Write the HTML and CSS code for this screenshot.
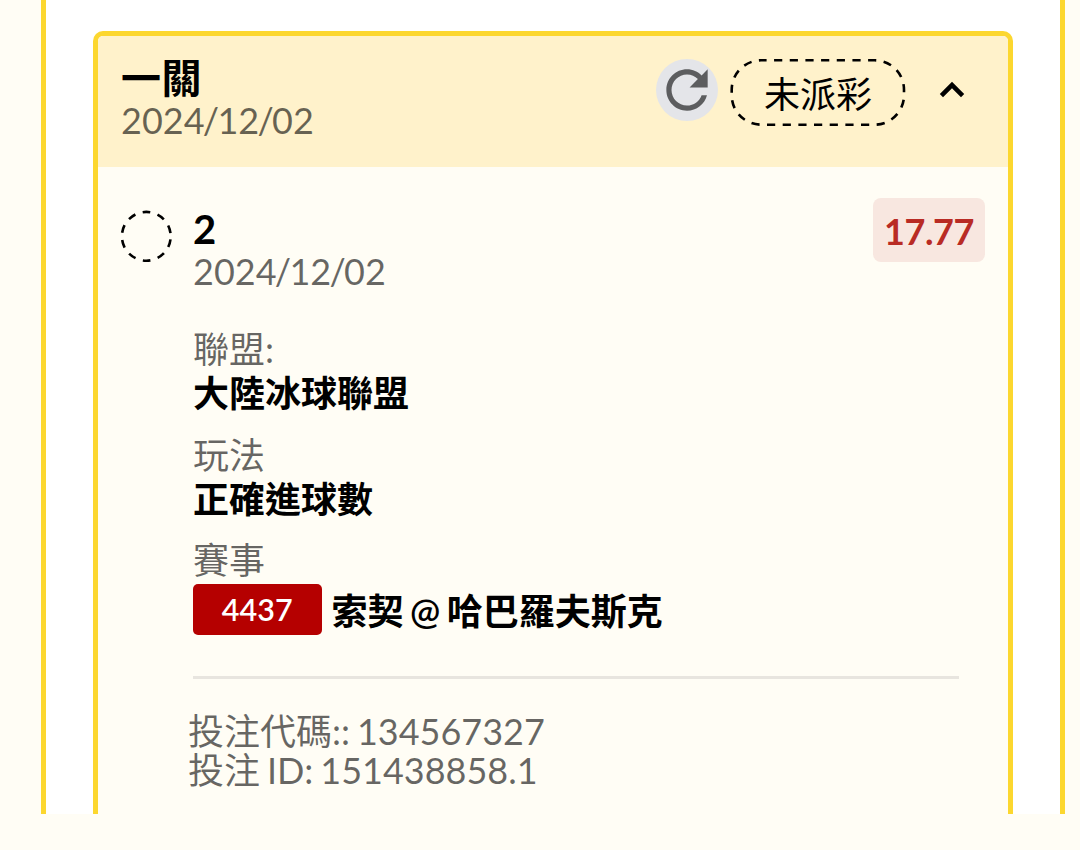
FILE: index.html
```html
<!DOCTYPE html>
<html lang="zh-Hant">
<head>
    <meta charset="UTF-8">
    <meta name="viewport" content="width=device-width, initial-scale=1.0">
    <title>投注記錄</title>
    <link rel="stylesheet" href="styles.css">
</head>
<body>
    <main class="panel">
        <section class="bet-card">
            <header class="card-header">
                <div class="heading">
                    <h1>一關</h1>
                    <p class="date">2024<span>/</span>12<span>/</span>02</p>
                </div>
                <div class="actions">
                    <button class="refresh" aria-label="refresh">
                        <svg viewBox="0 0 24 24">
                            <path d="M17.65 6.35C16.2 4.9 14.21 4 12 4c-4.42 0-7.99 3.58-7.99 8s3.57 8 7.99 8c3.73 0 6.84-2.55 7.73-6h-2.08c-.82 2.33-3.04 4-5.65 4-3.31 0-6-2.69-6-6s2.69-6 6-6c1.66 0 3.14.69 4.22 1.78L13 11h7V4l-2.35 2.35z"/>
                        </svg>
                    </button>
                    <div class="status">
                        <svg class="outline" viewBox="0 0 176 68">
                            <rect x="1.7" y="2.3" width="172.3" height="64.4" rx="29.4" stroke-dasharray="8.2 7.47" stroke-dashoffset="2.7"/>
                        </svg>
                        <span>未派彩</span>
                    </div>
                    <button class="toggle" aria-label="collapse">
                        <svg viewBox="0 0 24 24">
                            <path d="M12 7.9l-6.1 6.1 1.6 1.6L12 11.1l4.5 4.5L18.1 14z"/>
                        </svg>
                    </button>
                </div>
            </header>

            <div class="card-body">
                <svg class="pending" viewBox="0 0 52 52">
                    <circle cx="26.3" cy="26.3" r="24.4" stroke-dasharray="7.8 7.53" stroke-dashoffset="-3.2"/>
                </svg>
                <div class="details">
                    <div class="selection">
                        <div>
                            <h2>2</h2>
                            <p class="date">2024<span>/</span>12<span>/</span>02</p>
                        </div>
                        <span class="odds">17.77</span>
                    </div>

                    <dl>
                        <div class="field">
                            <dt>聯盟:</dt>
                            <dd>大陸冰球聯盟</dd>
                        </div>
                        <div class="field">
                            <dt>玩法</dt>
                            <dd>正確進球數</dd>
                        </div>
                        <div class="field">
                            <dt>賽事</dt>
                            <dd class="match">
                                <span class="match-code">4437</span>
                                <span class="teams">索契 <span class="at">@</span> 哈巴羅夫斯克</span>
                            </dd>
                        </div>
                    </dl>

                    <div class="bet-info">
                        <p>投注代碼:: 134567327</p>
                        <p>投注 ID: 151438858.1</p>
                    </div>
                </div>
            </div>
        </section>
    </main>
</body>
</html>
```
FILE: styles.css
```css
* {
    margin: 0;
    padding: 0;
    box-sizing: border-box;
}

body {
    height: 850px;
    overflow: hidden;
    background-color: #fffdf5;
    color: #000;
    font-family: Lato, 'Noto Sans CJK TC', sans-serif;
    font-size: 36px;
    word-spacing: -2.3px;
}

button {
    border: none;
    background: none;
}

svg {
    display: block;
}

.panel {
    height: 814px;
    margin: 0 15.5px 0 41px;
    padding: 31px 46.5px 0 47px;
    border: solid #fcd72f;
    border-width: 0 5px;
    background-color: #fff;
}

.bet-card {
    height: 783px;
    border: 5px solid #fcd72f;
    border-bottom: none;
    border-radius: 10px 10px 0 0;
    background-color: #fffdf5;
}

.card-header {
    display: flex;
    justify-content: space-between;
    height: 131px;
    padding: 20px 32px 0 23px;
    border-radius: 5px 5px 0 0;
    background-color: #fff2cb;
}

h1,
h2 {
    font-size: 40px;
    font-weight: 700;
    line-height: 44px;
}

h1 {
    letter-spacing: 0.6px;
}

.date {
    line-height: 40px;
    color: rgba(0, 0, 0, 0.6);
}

.date span {
    margin: 0 -1.7px;
}

/* Header buttons */
.actions {
    display: flex;
    align-items: flex-start;
}

.refresh {
    width: 62px;
    height: 62px;
    margin: 3px 12px 0 0;
    border-radius: 50%;
    background-color: #e4e5e9;
    fill: #5c5d5f;
}

.status {
    position: relative;
    width: 176px;
    height: 68px;
    margin-top: 2px;
    line-height: 73px;
    text-align: center;
}

.outline {
    position: absolute;
    inset: 0;
}

.outline,
.pending {
    fill: none;
    stroke: #000;
    stroke-width: 2.6;
}

.toggle {
    width: 48px;
    height: 48px;
    margin: 10px 0 0 22px;
}

/* Bet details */
.card-body {
    display: flex;
    padding: 0 23px 0 22px;
}

.pending {
    flex: none;
    width: 52px;
    height: 52px;
    margin-top: 43px;
}

.details {
    flex: 1;
    margin-left: 21px;
}

.selection {
    display: flex;
    justify-content: space-between;
    height: 124px;
    padding-top: 40px;
    margin-bottom: 36px;
}

.odds {
    width: 112px;
    height: 64px;
    margin-top: -9px;
    border-radius: 8px;
    background-color: #f8e7e0;
    color: #b92b24;
    font-weight: 700;
    line-height: 66px;
    letter-spacing: -0.4px;
    text-align: center;
}

.field {
    margin-bottom: 17.5px;
    line-height: 44px;
}

dt {
    color: rgba(0, 0, 0, 0.6);
}

dd {
    font-weight: 700;
}

.match {
    display: flex;
    gap: 10px;
    margin-top: 1.5px;
    line-height: 51px;
}

.match-code {
    width: 128.5px;
    height: 51px;
    border-radius: 5px;
    background-color: #b50000;
    color: #fff;
    font-size: 30.5px;
    font-weight: 600;
    text-align: center;
}

.teams {
    height: 51px;
    line-height: 54px;
}

.at {
    font-weight: 600;
}

.bet-info {
    margin: 41px 26px 0 0;
    padding-top: 33.5px;
    border-top: 3px solid #e8e5df;
    line-height: 39px;
    color: rgba(0, 0, 0, 0.6);
}

.bet-info p {
    margin-left: -5px;
}
```
